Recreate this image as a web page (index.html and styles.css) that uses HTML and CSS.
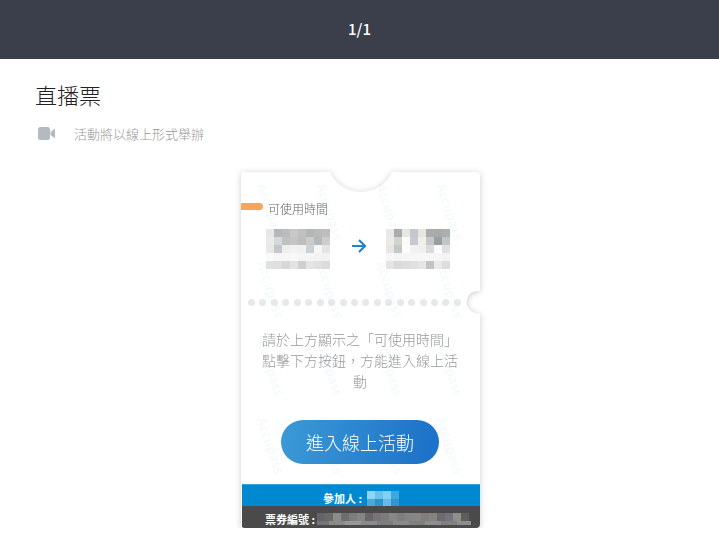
FILE: index.html
```html
<!DOCTYPE html>
<html lang="zh-Hant">
<head>
    <meta charset="UTF-8">
    <title>直播票</title>
    <link rel="stylesheet" href="styles.css">
</head>
<body>
    <header class="top-bar">1/1</header>

    <main class="content">
        <h1 class="page-title">直播票</h1>
        <div class="event-type">
            <svg class="video-icon" viewBox="0 0 17 13" width="17" height="13">
                <rect x="0" y="0" width="12" height="13" rx="2.5" fill="#b5b9c0"/>
                <path d="M12.5 5 L17 1.5 V11.5 L12.5 8 Z" fill="#b5b9c0"/>
            </svg>
            <span>活動將以線上形式舉辦</span>
        </div>

        <div class="ticket-shadow">
            <div class="ticket">
                <div class="watermark">
                    <span>Accupass</span><span>Accupass</span><span>Accupass</span><span>Accupass</span>
                    <span>Accupass</span><span>Accupass</span><span>Accupass</span><span>Accupass</span>
                    <span>Accupass</span><span>Accupass</span><span>Accupass</span><span>Accupass</span>
                    <span>Accupass</span><span>Accupass</span><span>Accupass</span><span>Accupass</span>
                </div>

                <div class="ticket-body">
                    <div class="time-label">
                        <i class="tag"></i>
                        <span>可使用時間</span>
                    </div>

                    <div class="time-range">
                        <svg class="mosaic" width="64" height="40" viewBox="0 0 8 5" shape-rendering="crispEdges">
                            <rect x="0" y="0" width="1" height="1" fill="#e8e8e8"/><rect x="1" y="0" width="1" height="1" fill="#b5b8ba"/><rect x="2" y="0" width="1" height="1" fill="#bbbdbc"/><rect x="3" y="0" width="1" height="1" fill="#c8c9c6"/><rect x="4" y="0" width="1" height="1" fill="#bfc0bf"/><rect x="5" y="0" width="1" height="1" fill="#b3b5b7"/><rect x="6" y="0" width="1" height="1" fill="#b9bbbb"/><rect x="7" y="0" width="1" height="1" fill="#bcbdbc"/>
                            <rect x="0" y="1" width="1" height="1" fill="#ecebe8"/><rect x="1" y="1" width="1" height="1" fill="#d4d9dc"/><rect x="2" y="1" width="1" height="1" fill="#bfc1c0"/><rect x="3" y="1" width="1" height="1" fill="#c4c5c3"/><rect x="4" y="1" width="1" height="1" fill="#bdbebb"/><rect x="5" y="1" width="1" height="1" fill="#cbccca"/><rect x="6" y="1" width="1" height="1" fill="#b5b9bd"/><rect x="7" y="1" width="1" height="1" fill="#cecdca"/>
                            <rect x="0" y="2" width="1" height="1" fill="#e8e8e8"/><rect x="1" y="2" width="1" height="1" fill="#c5c7cc"/><rect x="2" y="2" width="1" height="1" fill="#edeeed"/><rect x="3" y="2" width="1" height="1" fill="#f2f2f2"/><rect x="4" y="2" width="1" height="1" fill="#f0f1f2"/><rect x="5" y="2" width="1" height="1" fill="#cfd0d3"/><rect x="6" y="2" width="1" height="1" fill="#f7f7f7"/><rect x="7" y="2" width="1" height="1" fill="#e3e4e5"/>
                            <rect x="0" y="3" width="1" height="1" fill="#fafafa"/><rect x="1" y="3" width="1" height="1" fill="#f6f6f6"/><rect x="2" y="3" width="1" height="1" fill="#f6f6f6"/><rect x="3" y="3" width="1" height="1" fill="#f8f8f6"/><rect x="4" y="3" width="1" height="1" fill="#f5f5f3"/><rect x="5" y="3" width="1" height="1" fill="#f5f5f5"/><rect x="6" y="3" width="1" height="1" fill="#f3f3f3"/><rect x="7" y="3" width="1" height="1" fill="#f2f2f2"/>
                            <rect x="0" y="4" width="1" height="1" fill="#e0e0e0"/><rect x="1" y="4" width="1" height="1" fill="#dedfde"/><rect x="2" y="4" width="1" height="1" fill="#d8d8d8"/><rect x="3" y="4" width="1" height="1" fill="#e2e3e2"/><rect x="4" y="4" width="1" height="1" fill="#cfd0cf"/><rect x="5" y="4" width="1" height="1" fill="#e4e5e4"/><rect x="6" y="4" width="1" height="1" fill="#e0e1e2"/><rect x="7" y="4" width="1" height="1" fill="#dadbdc"/>
                        </svg>
                        <svg class="arrow" width="16" height="16" viewBox="0 0 16 16">
                            <path d="M1 8 H14 M8 2 L14 8 L8 14" fill="none" stroke="#1e87c8" stroke-width="2.2"/>
                        </svg>
                        <svg class="mosaic" width="64" height="40" viewBox="0 0 8 5" shape-rendering="crispEdges">
                            <rect x="0" y="0" width="1" height="1" fill="#e8e8e6"/><rect x="1" y="0" width="1" height="1" fill="#a9abac"/><rect x="2" y="0" width="1" height="1" fill="#e8e8e2"/><rect x="3" y="0" width="1" height="1" fill="#c4c7cc"/><rect x="4" y="0" width="1" height="1" fill="#e6e5e0"/><rect x="5" y="0" width="1" height="1" fill="#a9abac"/><rect x="6" y="0" width="1" height="1" fill="#a8aaaa"/><rect x="7" y="0" width="1" height="1" fill="#adafae"/>
                            <rect x="0" y="1" width="1" height="1" fill="#ecebe8"/><rect x="1" y="1" width="1" height="1" fill="#d2d4d0"/><rect x="2" y="1" width="1" height="1" fill="#fcfcf6"/><rect x="3" y="1" width="1" height="1" fill="#c6c9d0"/><rect x="4" y="1" width="1" height="1" fill="#f0efe8"/><rect x="5" y="1" width="1" height="1" fill="#c5c8c8"/><rect x="6" y="1" width="1" height="1" fill="#9a9ea2"/><rect x="7" y="1" width="1" height="1" fill="#c0c5c5"/>
                            <rect x="0" y="2" width="1" height="1" fill="#e6e6e6"/><rect x="1" y="2" width="1" height="1" fill="#c4c6c8"/><rect x="2" y="2" width="1" height="1" fill="#fdfdfb"/><rect x="3" y="2" width="1" height="1" fill="#f2f2f2"/><rect x="4" y="2" width="1" height="1" fill="#f0f0f0"/><rect x="5" y="2" width="1" height="1" fill="#dadbdc"/><rect x="6" y="2" width="1" height="1" fill="#fdfdfd"/><rect x="7" y="2" width="1" height="1" fill="#dfe0e2"/>
                            <rect x="0" y="3" width="1" height="1" fill="#f6f6f6"/><rect x="1" y="3" width="1" height="1" fill="#f4f4f4"/><rect x="2" y="3" width="1" height="1" fill="#f6f6f6"/><rect x="3" y="3" width="1" height="1" fill="#f7f7f7"/><rect x="4" y="3" width="1" height="1" fill="#f7f7f5"/><rect x="5" y="3" width="1" height="1" fill="#f6f6f6"/><rect x="6" y="3" width="1" height="1" fill="#f6f6f6"/><rect x="7" y="3" width="1" height="1" fill="#f3f3f3"/>
                            <rect x="0" y="4" width="1" height="1" fill="#e4e4e4"/><rect x="1" y="4" width="1" height="1" fill="#d9dada"/><rect x="2" y="4" width="1" height="1" fill="#dcdddc"/><rect x="3" y="4" width="1" height="1" fill="#dfe0df"/><rect x="4" y="4" width="1" height="1" fill="#e6e6e6"/><rect x="5" y="4" width="1" height="1" fill="#c2c3c5"/><rect x="6" y="4" width="1" height="1" fill="#eaeae8"/><rect x="7" y="4" width="1" height="1" fill="#dededc"/>
                        </svg>
                    </div>

                    <div class="dots">
                        <i></i><i></i><i></i><i></i><i></i><i></i><i></i><i></i><i></i><i></i>
                        <i></i><i></i><i></i><i></i><i></i><i></i><i></i><i></i><i></i>
                    </div>

                    <p class="notice">請於上方顯示之「可使用時間」點擊下方按鈕&#65292;方能進入線上活動</p>

                    <button class="enter-btn">進入線上活動</button>
                </div>

                <div class="attendee">
                    <span>參加人 :</span>
                    <svg width="32" height="16" viewBox="0 0 4 2" shape-rendering="crispEdges">
                        <rect x="0" y="0" width="1" height="1" fill="#8ed6f4"/><rect x="1" y="0" width="1" height="1" fill="#68c2ea"/><rect x="2" y="0" width="1" height="1" fill="#7fd0f3"/><rect x="3" y="0" width="1" height="1" fill="#3fa7dd"/>
                        <rect x="0" y="1" width="1" height="1" fill="#50a8d4"/><rect x="1" y="1" width="1" height="1" fill="#2f93cc"/><rect x="2" y="1" width="1" height="1" fill="#64bbe6"/><rect x="3" y="1" width="1" height="1" fill="#3495d2"/>
                    </svg>
                </div>
                <div class="ticket-no">
                    <span>票券編號 :</span>
                    <svg width="154" height="14" viewBox="0 0 154 14" shape-rendering="crispEdges">
                        <rect x="0" y="0" width="8" height="8" fill="#62666a"/><rect x="8" y="0" width="8" height="8" fill="#6a6a6a"/><rect x="16" y="0" width="8" height="8" fill="#8f8a8a"/><rect x="24" y="0" width="8" height="8" fill="#6e6e70"/><rect x="32" y="0" width="8" height="8" fill="#7c7c7c"/><rect x="40" y="0" width="8" height="8" fill="#858585"/><rect x="48" y="0" width="8" height="8" fill="#66666c"/><rect x="56" y="0" width="8" height="8" fill="#7a7476"/><rect x="64" y="0" width="8" height="8" fill="#7e7a7c"/><rect x="72" y="0" width="8" height="8" fill="#87878a"/><rect x="80" y="0" width="8" height="8" fill="#7d7f7d"/><rect x="88" y="0" width="8" height="8" fill="#848484"/><rect x="96" y="0" width="8" height="8" fill="#8a8582"/><rect x="104" y="0" width="8" height="8" fill="#7f7d7d"/><rect x="112" y="0" width="8" height="8" fill="#86827f"/><rect x="120" y="0" width="8" height="8" fill="#6c6a70"/><rect x="128" y="0" width="8" height="8" fill="#74727a"/><rect x="136" y="0" width="8" height="8" fill="#8f8f8a"/><rect x="144" y="0" width="8" height="8" fill="#5d5d5a"/>
                        <rect x="0" y="8" width="12" height="4" fill="#757575"/><rect x="12" y="8" width="16" height="4" fill="#8a8a8a"/><rect x="28" y="8" width="16" height="4" fill="#979797"/><rect x="44" y="8" width="16" height="4" fill="#8a8a8a"/><rect x="60" y="8" width="16" height="4" fill="#7c7c7c"/><rect x="76" y="8" width="16" height="4" fill="#8a8a8a"/><rect x="92" y="8" width="16" height="4" fill="#808080"/><rect x="108" y="8" width="16" height="4" fill="#8e8e8e"/><rect x="124" y="8" width="16" height="4" fill="#808080"/><rect x="140" y="8" width="14" height="4" fill="#8e8e8e"/>
                    </svg>
                </div>
            </div>
        </div>
    </main>
</body>
</html>
```

FILE: styles.css
```css
* { box-sizing: border-box; }
body { margin: 0; background: #fff; font-family: "Noto Sans CJK TC", "Noto Sans", sans-serif; }

.top-bar { height: 59px; background: #3a3f4b; color: #fff; font-size: 15px; font-weight: 500; text-align: center; line-height: 58px; }

.content { padding: 0 36px; }
.page-title { margin: 0 0 0 -1px; padding-top: 18px; font-size: 22px; font-weight: 300; line-height: 34px; color: #222; }
.event-type { display: flex; align-items: center; gap: 19px; height: 20px; margin-top: 12px; padding-left: 2px; font-size: 13px; font-weight: 300; color: #999; }
.video-icon { flex: none; }

.ticket-shadow { width: 239px; margin: 29px 0 0 205px; filter: drop-shadow(0 1px 3px rgba(0, 0, 0, .2)); }
.ticket {
    position: relative;
    display: flex;
    flex-direction: column;
    height: 356px;
    background: #fff;
    overflow: hidden;
    clip-path: path("M4 0 H89 A34 34 0 0 0 151 0 H235 Q239 0 239 4 V119 A11.2 11.2 0 1 0 239 141 V352 Q239 356 235 356 H4 Q0 356 0 352 V4 Q0 0 4 0 Z");
}

.watermark { position: absolute; inset: 0 0 44px 0; display: grid; grid-template-columns: repeat(4, 1fr); grid-auto-rows: 78px; justify-items: center; align-items: center; overflow: hidden; }
.watermark span { transform: rotate(72deg); font-size: 13px; font-weight: 700; color: #f5fafd; white-space: nowrap; }

.ticket-body { position: relative; flex: 1; display: flex; flex-direction: column; padding-right: 1px; }

.time-label { display: flex; align-items: center; gap: 5px; margin-top: 28px; height: 17px; font-size: 12px; font-weight: 300; color: #666; }
.tag { width: 22px; height: 7px; margin-top: -4px; background: #f7a55b; border-radius: 0 4px 4px 0; }

.time-range { display: flex; justify-content: space-between; align-items: center; width: 184px; margin: 12px 0 0 25px; }
.mosaic { display: block; }
.arrow { margin: -6px 0 0 2px; }

.dots { display: flex; justify-content: space-between; width: 213px; margin: 30px 0 0 7px; }
.dots i { width: 7px; height: 7px; border-radius: 50%; background: #e6e8ea; }

.notice { width: 200px; margin: 23px auto 0; font-size: 14px; font-weight: 300; line-height: 21px; text-align: center; color: #999; }

.enter-btn { display: block; flex: none; width: 158px; height: 44px; margin: 28px auto 0; border: 0; border-radius: 22px; background: linear-gradient(100deg, #3c9ad6, #1b70c8); color: #fff; font-family: inherit; font-size: 18px; font-weight: 300; }

.attendee { position: relative; display: flex; justify-content: center; align-items: flex-end; gap: 5px; height: 22px; margin-left: 1px; background: #0088d0; border-top: 1px solid #3aa3dc; color: #fff; font-size: 11px; font-weight: 700; line-height: 16px; }
.attendee svg { display: block; margin-bottom: -1px; }
.ticket-no { position: relative; display: flex; align-items: flex-end; gap: 2px; height: 22px; margin-left: 1px; padding: 0 0 1px 23px; background: #4a4a4a; color: #fff; font-size: 11px; font-weight: 700; line-height: 15px; }
.ticket-no svg { display: block; flex: none; }
```
